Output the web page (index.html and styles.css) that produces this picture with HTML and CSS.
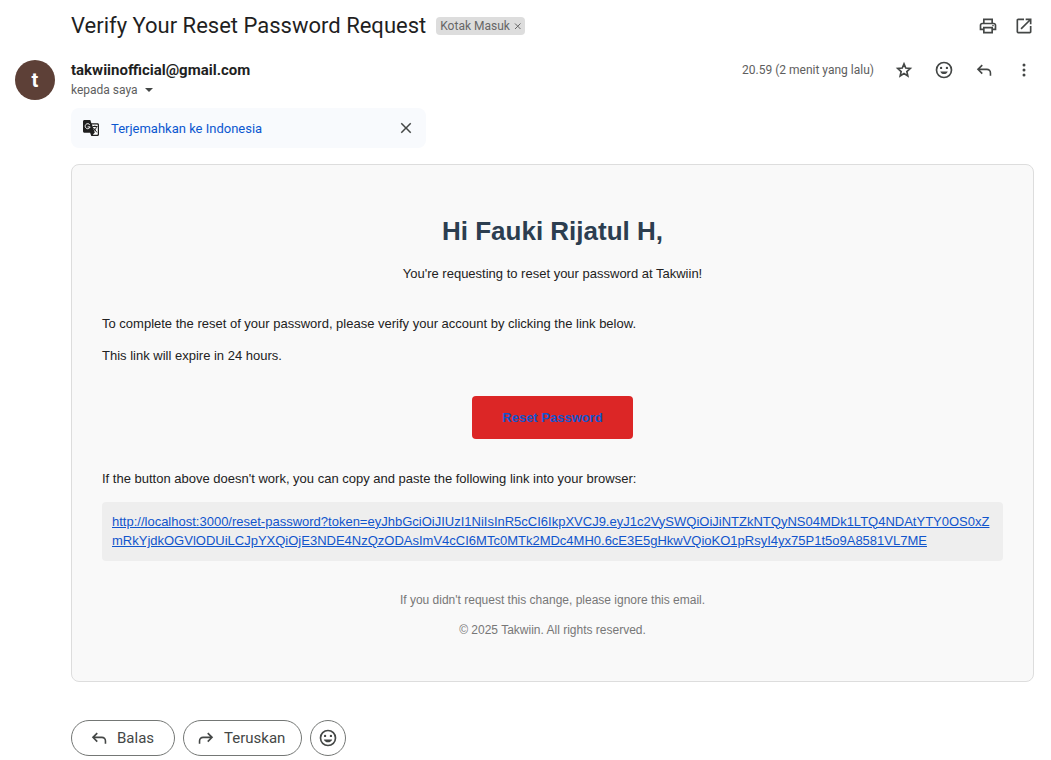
FILE: index.html
```html
<!DOCTYPE html>
<html lang="id">
<head>
<meta charset="utf-8">
<title>Verify Your Reset Password Request</title>
<link rel="stylesheet" href="styles.css">
</head>
<body>
<main class="message">
  <header class="subject-bar">
    <h1 class="subject">Verify Your Reset Password Request</h1>
    <span class="label">Kotak Masuk <button class="label-remove" type="button" aria-label="Hapus label"><svg viewBox="0 0 8 8" width="8" height="8"><path d="M1 1.500l5.500 5.500M6.500 1.500L1 7"/></svg></button></span>
    <div class="subject-tools">
      <button class="icon-button" type="button" aria-label="Cetak"><svg class="icon" viewBox="0 0 24 24"><path d="M19 8h-1V3H6v5H5c-1.660 0-3 1.340-3 3v6h4v4h12v-4h4v-6c0-1.660-1.340-3-3-3zM8 5h8v3H8V5zm8 12v2H8v-4h8v2zm2-2v-2H6v2H4v-4c0-.550.450-1 1-1h14c.550 0 1 .450 1 1v4h-2z"/><circle cx="18" cy="11.500" r="1"/></svg></button>
      <button class="icon-button" type="button" aria-label="Di jendela baru"><svg class="icon" viewBox="0 0 24 24"><path d="M19 19H5V5h7V3H5c-1.110 0-2 .900-2 2v14c0 1.100.890 2 2 2h14c1.100 0 2-.900 2-2v-7h-2v7zM14 3v2h3.590l-9.830 9.830 1.410 1.410L19 6.410V10h2V3h-7z"/></svg></button>
    </div>
  </header>

  <div class="avatar" aria-hidden="true">t</div>

  <section class="sender-bar">
    <div class="sender">
      <div class="sender-name">takwiinofficial@gmail.com</div>
      <button class="recipient" type="button">kepada saya <svg viewBox="0 0 8 4" width="8" height="4"><path d="M0 0h8L4 4z"/></svg></button>
    </div>
    <time class="sent">20.59 (2 menit yang lalu)</time>
    <div class="message-tools">
      <button class="icon-button" type="button" aria-label="Berbintang"><svg class="icon icon-star" viewBox="0 0 24 24"><path d="M12 4.700l2.100 5 5.400.500-4.100 3.600 1.200 5.300-4.600-2.800-4.600 2.800 1.200-5.300-4.100-3.600 5.400-.500z"/></svg></button>
      <button class="icon-button" type="button" aria-label="Tambahkan reaksi"><svg class="icon" viewBox="0 0 24 24"><path d="M12 2a10 10 0 1 0 0 20 10 10 0 0 0 0-20zm0 18a8 8 0 1 1 0-16 8 8 0 0 1 0 16z"/><circle cx="8.500" cy="9.500" r="1.400"/><circle cx="15.500" cy="9.500" r="1.400"/><path d="M7.500 13.700h9c-.700 1.900-2.400 3.100-4.500 3.100s-3.800-1.200-4.500-3.100z"/></svg></button>
      <button class="icon-button" type="button" aria-label="Balas"><svg class="icon" viewBox="0 0 24 24"><path d="M18.800 19v-3.500a3.300 3.300 0 0 0-3.300-3.300H7.200l3.400 3.400-1.400 1.400-5.800-5.800 5.800-5.800 1.400 1.400-3.400 3.400h8.300a5.200 5.200 0 0 1 5.200 5.300V19z"/></svg></button>
      <button class="icon-button" type="button" aria-label="Lainnya"><svg class="icon" viewBox="0 0 24 24"><circle cx="12" cy="6" r="1.800"/><circle cx="12" cy="12" r="1.800"/><circle cx="12" cy="18" r="1.800"/></svg></button>
    </div>
  </section>

  <div class="translate">
    <svg class="translate-icon" viewBox="0 0 20 20"><path d="M3.500 2h5.800l1.100 3.200h6.100c.900 0 1.500.600 1.500 1.500v9.800c0 .900-.600 1.500-1.500 1.500h-6.200l-1.200-3.200H3.500C2.600 14.800 2 14.200 2 13.300V3.500C2 2.600 2.600 2 3.500 2z"/><path class="translate-sheet" d="M10.900 6.500h5.400l.5.500v9.300l-.5.500h-4.500l2-2.300z"/><path class="translate-g" d="M8.700 6.700a2.500 2.500 0 1 0 .4 2.200H6.600"/><path class="translate-mark" d="M11.500 8.500h5M13.900 7.500v1M15.600 8.500c-.4 1.900-1.500 3.300-3 4.500M12.300 9.800l3.600 4.600"/></svg>
    <a class="translate-link" href="#">Terjemahkan ke Indonesia</a>
    <button class="icon-button" type="button" aria-label="Tutup"><svg class="icon icon-small" viewBox="0 0 24 24"><path d="M19 6.400L17.600 5 12 10.600 6.400 5 5 6.400l5.600 5.600L5 17.600 6.400 19l5.600-5.600 5.600 5.600 1.400-1.400-5.600-5.600z"/></svg></button>
  </div>

  <article class="mail">
    <div class="mail-head">
      <h2 class="mail-title">Hi Fauki Rijatul H,</h2>
      <p>You're requesting to reset your password at Takwiin!</p>
    </div>
    <p>To complete the reset of your password, please verify your account by clicking the link below.</p>
    <p>This link will expire in 24 hours.</p>
    <div class="mail-action"><a class="mail-button" href="#">Reset Password</a></div>
    <p>If the button above doesn't work, you can copy and paste the following link into your browser:</p>
    <p class="mail-url"><a href="#">http://localhost:3000/reset-password?token=eyJhbGciOiJIUzI1NiIsInR5cCI6IkpXVCJ9.eyJ1c2VySWQiOiJiNTZkNTQyNS04MDk1LTQ4NDAtYTY0OS0xZmRkYjdkOGVlODUiLCJpYXQiOjE3NDE4NzQzODAsImV4cCI6MTc0MTk2MDc4MH0.6cE3E5gHkwVQioKO1pRsyI4yx75P1t5o9A8581VL7ME</a></p>
    <footer class="mail-foot">
      <p>If you didn't request this change, please ignore this email.</p>
      <p>© 2025 Takwiin. All rights reserved.</p>
    </footer>
  </article>

  <div class="replies">
    <button class="reply" type="button"><svg class="icon" viewBox="0 0 24 24"><path d="M18.800 19v-3.500a3.300 3.300 0 0 0-3.300-3.300H7.200l3.400 3.400-1.400 1.400-5.800-5.800 5.800-5.800 1.400 1.400-3.400 3.400h8.300a5.200 5.200 0 0 1 5.200 5.300V19z"/></svg>Balas</button>
    <button class="reply reply-forward" type="button"><svg class="icon" viewBox="0 0 24 24"><path d="M5.200 19v-3.500a3.300 3.300 0 0 1 3.300-3.300h8.300l-3.400 3.400 1.400 1.400 5.800-5.800-5.800-5.800-1.400 1.400 3.400 3.400H8.500a5.200 5.200 0 0 0-5.200 5.300V19z"/></svg>Teruskan</button>
    <button class="reply reply-round" type="button" aria-label="Tambahkan reaksi"><svg class="icon" viewBox="0 0 24 24"><path d="M12 2a10 10 0 1 0 0 20 10 10 0 0 0 0-20zm0 18a8 8 0 1 1 0-16 8 8 0 0 1 0 16z"/><circle cx="8.500" cy="9.500" r="1.400"/><circle cx="15.500" cy="9.500" r="1.400"/><path d="M7 13.700h10c-.700 2.100-2.600 3.500-5 3.500s-4.300-1.400-5-3.500z"/></svg></button>
  </div>
</main>
</body>
</html>
```

FILE: styles.css
```css
* { box-sizing: border-box; }

body {
  margin: 0;
  background: #fff;
  color: #1f1f1f;
  font-family: Roboto, "Open Sans", sans-serif;
}

button {
  border: 0;
  padding: 0;
  background: none;
  color: inherit;
  font: inherit;
  cursor: pointer;
}

.message {
  display: grid;
  grid-template-columns: 40px minmax(0, 1fr);
  column-gap: 16px;
  padding: 8px 17px 4px 15px;
}

.message > * { grid-column: 2; }

.icon {
  display: block;
  width: 20px;
  height: 20px;
  fill: #444746;
}

.icon-small {
  width: 18px;
  height: 18px;
}

.icon-star {
  fill: none;
  stroke: #444746;
  stroke-width: 2;
}

.icon-button {
  display: grid;
  place-items: center;
  width: 20px;
  height: 20px;
}

.subject-bar {
  display: flex;
  align-items: center;
  height: 36px;
}

.subject {
  margin: 0;
  font-size: 22px;
  font-weight: 400;
  line-height: 28px;
}

.label {
  display: flex;
  align-items: center;
  gap: 4px;
  height: 18px;
  margin-left: 10px;
  padding: 0 3px 0 4px;
  border-radius: 4px;
  background: #ddd;
  color: #666;
  font-size: 12px;
}

.label-remove svg {
  display: block;
  fill: none;
  stroke: #666;
}

.subject-tools {
  display: flex;
  gap: 16px;
  margin-left: auto;
}

.message > .avatar {
  grid-column: 1;
  grid-row: 2;
  display: grid;
  place-items: center;
  width: 40px;
  height: 40px;
  margin-top: 16px;
  border-radius: 50%;
  background: #5d4037;
  color: #fff;
  font-size: 20px;
  font-weight: 700;
}

.sender-bar {
  grid-row: 2;
  display: flex;
  align-items: flex-start;
  padding-top: 16px;
}

.sender-name {
  font-size: 15px;
  font-weight: 700;
  line-height: 20px;
}

.recipient {
  display: flex;
  align-items: center;
  gap: 7px;
  color: #5e5e5e;
  font-size: 12px;
  line-height: 20px;
}

.recipient svg { fill: #444746; }

.sent {
  margin-left: auto;
  color: #5e5e5e;
  font-size: 12px;
  line-height: 20px;
}

.message-tools {
  display: flex;
  gap: 20px;
  margin-left: 20px;
}

.translate {
  display: flex;
  align-items: center;
  width: 355px;
  max-width: 100%;
  height: 40px;
  margin-top: 8px;
  padding: 0 10px;
  border-radius: 8px;
  background: #f8fafd;
}

.translate-icon {
  width: 20px;
  height: 20px;
  fill: #1f1f1f;
}

.translate-sheet { fill: #fff; }

.translate-g,
.translate-mark {
  fill: none;
  stroke: #fff;
}

.translate-mark { stroke: #1f1f1f; }

.translate-link {
  margin: 0 auto 0 10px;
  color: #0b57d0;
  font-size: 13px;
  text-decoration: none;
}

.mail {
  margin-top: 16px;
  padding: 30px;
  border: 1px solid #ddd;
  border-radius: 8px;
  background: #f9f9f9;
  color: #222;
  font: 13px/1.5 "Liberation Sans", Arial, sans-serif;
}

.mail p { margin: 13px 0; }

.mail a { color: #1155cc; }

.mail-head {
  margin-bottom: 30px;
  text-align: center;
}

.mail .mail-title {
  margin: 17px 0 13px;
  color: #2c3e50;
  font-size: 26px;
}

.mail-action {
  display: flex;
  justify-content: center;
  margin: 30px 0;
}

.mail-button {
  padding: 12px 30px;
  border-radius: 4px;
  background: #dc2626;
  font-weight: 700;
  text-decoration: none;
}

.mail .mail-url {
  padding: 10px;
  border-radius: 4px;
  background: #eee;
  word-break: break-all;
}

.mail-foot {
  margin-top: 30px;
  color: #777;
  font-size: 12px;
  text-align: center;
}

.mail .mail-foot p { margin: 12px 0; }

.replies {
  display: flex;
  gap: 8px;
  margin-top: 38px;
}

.reply {
  display: flex;
  align-items: center;
  gap: 8px;
  height: 36px;
  padding: 0 20px 0 17px;
  border: 1px solid #747775;
  border-radius: 18px;
  color: #444746;
  font-size: 15px;
}

.reply-forward { padding: 0 16px 0 12px; }

.reply-round {
  width: 36px;
  justify-content: center;
  padding: 0;
}
```
